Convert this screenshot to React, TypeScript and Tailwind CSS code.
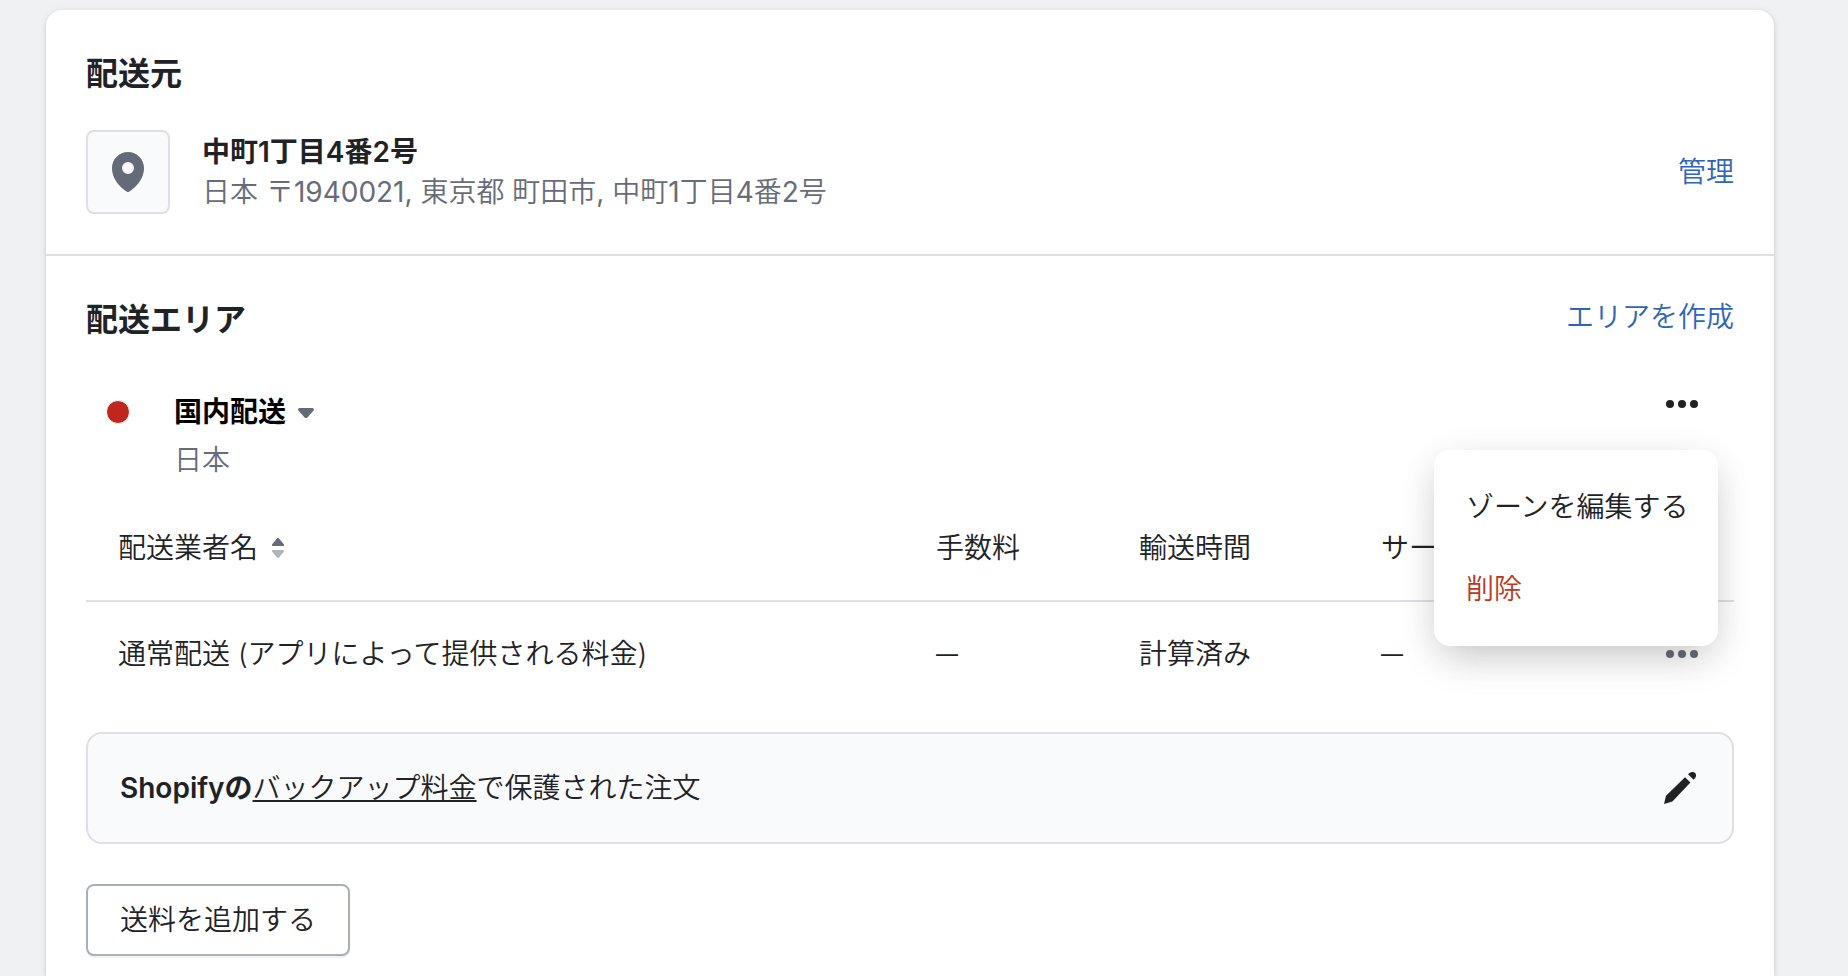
import { useState } from 'react';

const rates = [
  { name: '通常配送 (アプリによって提供される料金)', fee: '—', time: '計算済み', service: '—' },
];

export default function App() {
  const [menuOpen, setMenuOpen] = useState(true);

  return (
    <div className="flex min-h-screen bg-[#f0f1f3] pt-[10px] pl-[46px] pr-[74px] font-['Inter','Noto_Sans_CJK_JP',sans-serif] text-[28px] leading-10 font-[350] text-[#202226]">
      <main className="flex-1 rounded-t-2xl bg-white shadow-[0_0_10px_rgba(23,24,24,0.05),0_2px_4px_rgba(0,0,0,0.15)]">

        {/* Ship-from location */}
        <section className="border-b-2 border-[#dfe0e5] p-10">
          <h2 className="mb-8 text-[32px] leading-12 font-semibold">配送元</h2>
          <div className="flex items-center gap-8">
            <div className="flex size-[84px] items-center justify-center rounded-lg border-2 border-[#dfe0e5] bg-[#f9fafc]">
              <PinIcon />
            </div>
            <div className="flex-1">
              <p className="font-semibold">中町1丁目4番2号</p>
              <p className="font-['Inter','Noto_Sans_CJK_JP_DemiLight','Noto_Sans_CJK_JP',sans-serif] font-normal text-[#666c78]">
                日本 〒1940021, 東京都 町田市, 中町1丁目4番2号
              </p>
            </div>
            <a href="#manage" className="text-[#3064b7]">管理</a>
          </div>
        </section>

        {/* Shipping zones */}
        <section className="px-10 pt-10 pb-5">
          <div className="mb-10 flex items-start justify-between">
            <h2 className="text-[32px] leading-12 font-semibold">配送エリア</h2>
            <a href="#create-zone" className="leading-[42px] text-[#3064b7]">エリアを作成</a>
          </div>

          <div className="flex items-start pr-8">
            <div className="flex h-12 w-[88px] items-center pt-2 pl-5">
              <span className="size-6 rounded-full border border-white bg-[#bf271d]"></span>
            </div>
            <div className="flex-1 pt-2">
              <button type="button" className="flex items-center font-semibold text-black">
                国内配送
                <CaretIcon />
              </button>
              <p className="mt-2 text-[#666c78]">日本</p>
            </div>
            <div className="relative">
              <button
                type="button"
                aria-label="国内配送のメニュー"
                aria-expanded={menuOpen}
                onClick={() => setMenuOpen(!menuOpen)}
                className="block"
              >
                <DotsIcon />
              </button>
              {menuOpen && <ZoneMenu />}
            </div>
          </div>

          <table className="w-full table-fixed border-separate border-spacing-0 text-left">
            <colgroup>
              <col />
              <col className="w-[203px]" />
              <col className="w-[242px]" />
              <col className="w-[230px]" />
              <col className="w-[123px]" />
            </colgroup>
            <thead>
              <tr>
                <th className="border-b-2 border-[#dfe0e5] pt-12 pb-8 pl-8 font-[350]">
                  <button type="button" className="flex items-center">
                    配送業者名
                    <SortIcon />
                  </button>
                </th>
                <th className="border-b-2 border-[#dfe0e5] pt-12 pb-8 font-[350]">手数料</th>
                <th className="border-b-2 border-[#dfe0e5] pt-12 pb-8 font-[350]">輸送時間</th>
                <th className="border-b-2 border-[#dfe0e5] pt-12 pb-8 font-[350]">サービス</th>
                <td className="border-b-2 border-[#dfe0e5]"></td>
              </tr>
            </thead>
            <tbody>
              {rates.map((rate) => (
                <tr key={rate.name}>
                  <td className="py-8 pl-8">{rate.name}</td>
                  <td className="py-8 text-[22px] font-normal">{rate.fee}</td>
                  <td className="py-8">{rate.time}</td>
                  <td className="py-8 text-[22px] font-normal">{rate.service}</td>
                  <td className="py-8 pr-8">
                    <button type="button" aria-label="送料のメニュー" className="ml-auto block text-[#666c78]">
                      <DotsIcon />
                    </button>
                  </td>
                </tr>
              ))}
            </tbody>
          </table>

          {/* Backup rates */}
          <div className="mt-[26px] flex items-center justify-between rounded-2xl border-2 border-[#dfe0e5] bg-[#f9fafc] px-8 py-[34px]">
            <p>
              <span className="font-semibold">Shopifyの</span>
              <a href="#backup-rates" className="underline decoration-2 underline-offset-2">バックアップ料金</a>
              で保護された注文
            </p>
            <button type="button" aria-label="編集" className="block">
              <PencilIcon />
            </button>
          </div>

          <button
            type="button"
            className="mt-10 rounded-lg border-2 border-[#aaaebb] bg-white px-8 py-[14px] shadow-[0_2px_0_rgba(0,0,0,0.05)]"
          >
            送料を追加する
          </button>
        </section>
      </main>
    </div>
  );
}

function ZoneMenu() {
  return (
    <div className="absolute top-[66px] -right-4 w-[284px] rounded-2xl bg-white p-4 leading-[42px] whitespace-nowrap shadow-[0_6px_40px_rgba(23,24,24,0.06),0_16px_40px_-8px_rgba(23,24,24,0.22)]">
      <button type="button" className="block w-full px-4 py-5 text-left">ゾーンを編集する</button>
      <button type="button" className="block w-full px-4 py-5 text-left text-[#bb3722]">削除</button>
    </div>
  );
}

function PinIcon() {
  return (
    <svg viewBox="0 0 20 20" className="size-10 fill-[#646b76]">
      <path
        fillRule="evenodd"
        d="M10 0C5.589 0 2 3.589 2 8c0 7.495 7.197 11.694 7.504 11.869a.996.996 0 0 0 .992 0C10.803 19.694 18 15.495 18 8c0-4.412-3.589-8-8-8zm0 11a3 3 0 1 1 0-6 3 3 0 0 1 0 6z"
      />
    </svg>
  );
}

function CaretIcon() {
  return (
    <svg viewBox="0 0 20 20" className="size-10 fill-[#646b76]">
      <path d="M13.098 8H6.902c-.751 0-1.172.754-.708 1.268L9.292 12.7c.36.399 1.055.399 1.416 0l3.098-3.433C14.27 8.754 13.849 8 13.098 8z" />
    </svg>
  );
}

function SortIcon() {
  return (
    <svg viewBox="0 0 20 20" className="size-10">
      <path fill="#646b76" d="M7.6 9h4.8c.5 0 .8-.5.5-.9l-2.4-2.9c-.3-.3-.7-.3-1 0L7.1 8.1c-.3.4 0 .9.5.9z" />
      <path fill="#b0b4bc" d="M12.4 11H7.6c-.5 0-.8.5-.5.9l2.4 2.9c.3.3.7.3 1 0l2.4-2.9c.3-.4 0-.9-.5-.9z" />
    </svg>
  );
}

function DotsIcon() {
  return (
    <svg viewBox="0 0 20 20" className="size-10 fill-current">
      <circle cx="4" cy="10" r="2" />
      <circle cx="10" cy="10" r="2" />
      <circle cx="16" cy="10" r="2" />
    </svg>
  );
}

function PencilIcon() {
  return (
    <svg viewBox="0 0 20 20" className="size-10 fill-current">
      <path d="M12.5 4.6l2.7 2.7-9 9.5L2 18l1-4.1z" />
      <path d="M14 3.1l.6-.5c1.2-1 2.5-.7 3-.1s.7 1.8-.2 2.7l-.6.7z" />
    </svg>
  );
}
